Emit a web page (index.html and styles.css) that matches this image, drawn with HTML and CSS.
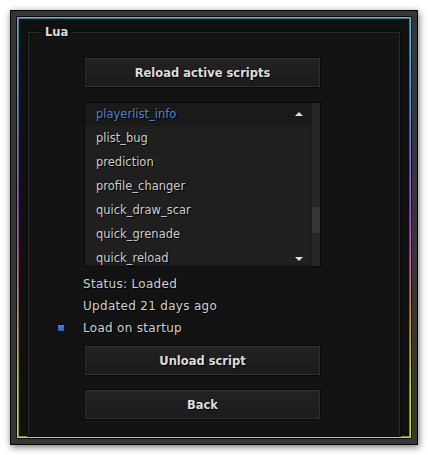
FILE: index.html
```html
<!DOCTYPE html>
<html>
<head>
<meta charset="utf-8">
<link rel="stylesheet" href="styles.css">
</head>
<body>
<div class="window">
  <div class="edge">
    <div class="grad">
      <div class="inner">
        <fieldset class="group">
          <legend class="group-title">Lua</legend>
          <div class="content">
            <button class="btn">Reload active scripts</button>
            <div class="list">
              <div class="items">
                <div class="item selected">playerlist_info</div>
                <div class="item">plist_bug</div>
                <div class="item">prediction</div>
                <div class="item">profile_changer</div>
                <div class="item">quick_draw_scar</div>
                <div class="item">quick_grenade</div>
                <div class="item">quick_reload</div>
                <span class="arrow up"></span>
                <span class="arrow down"></span>
              </div>
              <div class="scrollbar"><div class="thumb"></div></div>
            </div>
            <div class="label">Status: Loaded</div>
            <div class="label">Updated 21 days ago</div>
            <div class="label check-row"><span class="checkbox"></span>Load on startup</div>
            <button class="btn btn-unload">Unload script</button>
            <button class="btn btn-back">Back</button>
          </div>
        </fieldset>
      </div>
    </div>
  </div>
</div>
</body>
</html>
```
FILE: styles.css
```css
html, body {
  margin: 0;
  padding: 0;
  background: #ffffff;
}
body {
  padding: 10px;
  font-family: "DejaVu Sans", Verdana, sans-serif;
  font-size: 11px;
}
.window {
  width: 396px;
  height: 423px;
  border: 1px solid #050505;
  background: #363636;
  padding: 5px;
  box-sizing: content-box;
  box-shadow: 1px 2px 7px rgba(0, 0, 0, 0.55);
  display: flex;
}
.window * { box-sizing: border-box; }
.edge {
  flex: 1;
  display: flex;
  border: 1px solid #0a0a0a;
}
.grad {
  flex: 1;
  display: flex;
  padding: 2px;
  background: linear-gradient(to bottom, #58b8de 0%, #5a92de 22%, #9c5ad2 42%, #c25aba 55%, #ce9452 72%, #c2d242 88%, #b6e242 100%);
}
.inner {
  flex: 1;
  display: flex;
  flex-direction: column;
  padding: 6px 9px 0 9px;
  background-color: #0f0f0f;
  background-image: repeating-conic-gradient(#151515 0 25%, #0c0c0c 0 50%);
  background-size: 4px 4px;
  box-shadow: 0 0 0 1px rgba(0, 0, 0, 0.35);
}
.group {
  flex: 1;
  margin: 0;
  padding: 18px 0 0 0;
  min-width: 0;
  border: 1px solid #2a2a2a;
  border-bottom: none;
  background: #131313;
  box-shadow: 0 0 0 1px #0a0a0a;
}
.group-title {
  margin-left: 12px;
  padding: 0 4px;
  font-weight: bold;
  font-size: 11.5px;
  color: #dcdcdc;
  text-shadow: 1px 1px 0 #000;
  line-height: 14px;
}
.content {
  margin-left: 54px;
  width: 240px;
  display: flex;
  flex-direction: column;
}
.btn {
  display: block;
  margin: 0 0 0 1px;
  width: 237px;
  height: 31px;
  padding: 0;
  border: 1px solid #0a0a0a;
  box-shadow: inset 0 0 0 1px #303030;
  background: linear-gradient(to bottom, #222222, #1b1b1b);
  color: #dcdcdc;
  font-family: "DejaVu Sans", Verdana, sans-serif;
  font-weight: bold;
  font-size: 11.5px;
  text-shadow: 1px 1px 0 #000;
}
.list {
  margin: 14px 0 0 1px;
  width: 237px;
  height: 165px;
  display: flex;
  border: 1px solid #0a0a0a;
  background: #1f1f1f;
  overflow: hidden;
}
.items {
  flex: 1;
  position: relative;
  margin-top: -1px;
}
.item {
  height: 24px;
  line-height: 24px;
  padding-left: 11px;
  font-size: 11.5px;
  color: #cdcdcd;
  text-shadow: 1px 1px 0 #000;
}
.item.selected {
  color: #4f80d2;
  background: #1a1a1a;
}
.arrow {
  position: absolute;
  left: 210px;
  width: 0;
  height: 0;
  border-left: 4px solid transparent;
  border-right: 4px solid transparent;
}
.arrow.up {
  top: 10px;
  border-bottom: 4px solid #e0e0e0;
}
.arrow.down {
  top: 155px;
  border-top: 4px solid #e0e0e0;
}
.scrollbar {
  width: 9px;
  background: #272727;
  border-left: 1px solid #1a1a1a;
  padding-top: 104px;
}
.thumb {
  height: 26px;
  background: #363636;
}
.label {
  height: 22px;
  line-height: 22px;
  font-size: 12px;
  letter-spacing: 0.3px;
  color: #cfcfcf;
  text-shadow: 1px 1px 0 #000;
}
.list + .label { margin-top: 6px; }
.check-row {
  display: flex;
  align-items: center;
}
.checkbox {
  width: 8px;
  height: 8px;
  margin-left: -26px;
  margin-right: 18px;
  border: 1px solid #0a0a0a;
  background: linear-gradient(to bottom, #4a82e4, #2f5fc0);
}
.btn-unload { margin-top: 6px; }
.btn-back { margin-top: 13px; }
```
